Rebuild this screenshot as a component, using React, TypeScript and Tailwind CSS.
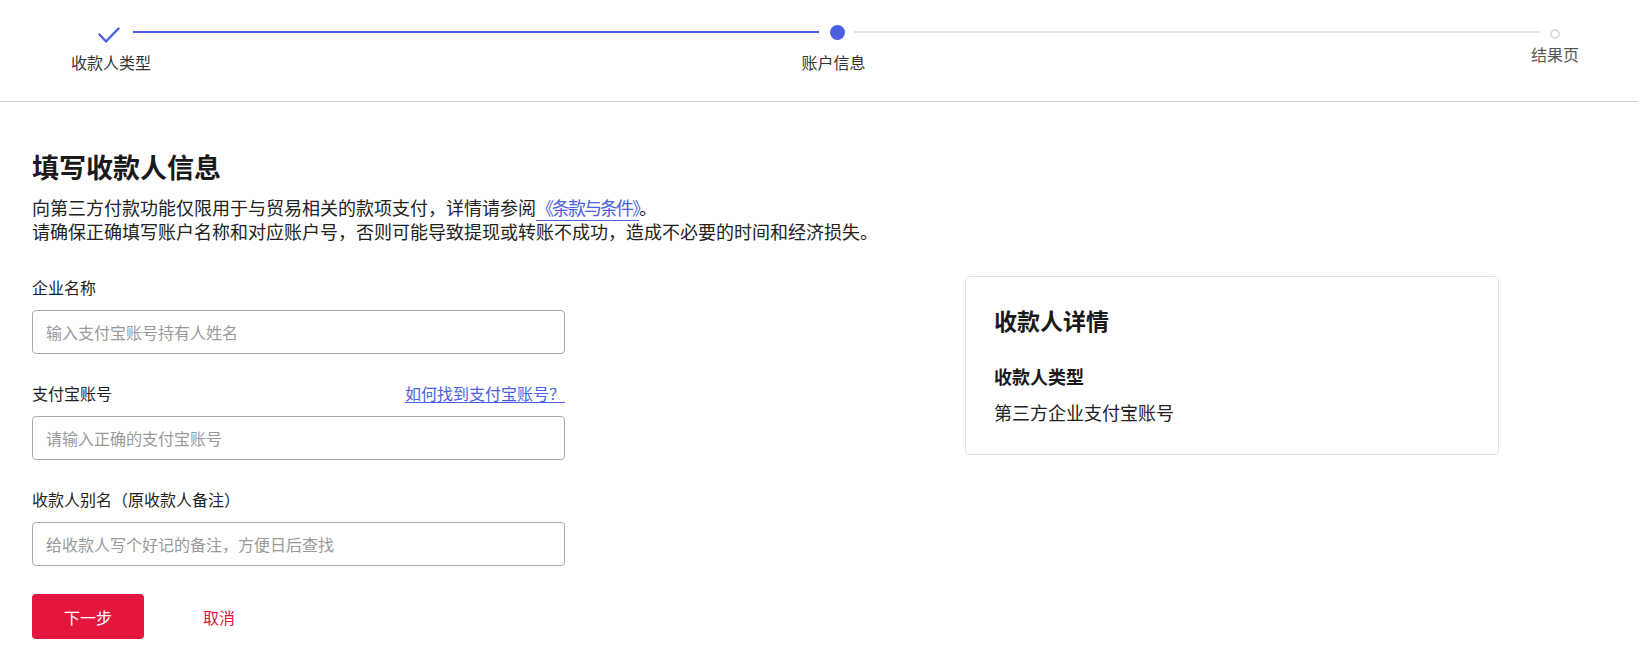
const FONT = { fontFamily: '"Noto Sans CJK SC", "Noto Sans", sans-serif' };

function Stepper() {
  return (
    <div className="flex h-[102px] items-start border-b border-[#cfcfcf] pl-[98px] pr-[78px] pt-[20px]">
      {/* step 1 - done */}
      <div className="flex w-[22px] flex-col items-center">
        <div className="flex h-[24px] w-[22px] items-center justify-center">
          <svg width="22" height="18" viewBox="0 0 22 18" fill="none" className="mt-[8px]">
            <path d="M1.5 7.5 L8 14.5 L20.5 1.5" stroke="#4a60e0" strokeWidth="2.4" strokeLinecap="round" strokeLinejoin="round" />
          </svg>
        </div>
        <span className="mt-[7px] whitespace-nowrap pl-[4px] text-[16px] leading-[22px] text-[#333]">收款人类型</span>
      </div>
      <div className="ml-[13px] mr-[11px] mt-[11px] h-[2px] flex-1 bg-[#4a60e0]" />
      {/* step 2 - current */}
      <div className="flex w-[15px] flex-col items-center">
        <div className="flex h-[24px] items-center">
          <div className="h-[15px] w-[15px] rounded-full bg-[#4a60e0]" />
        </div>
        <span className="mt-[7px] whitespace-nowrap pr-[8px] text-[16px] leading-[22px] text-[#333]">账户信息</span>
      </div>
      <div className="ml-[9px] mr-[10px] mt-[11px] h-[2px] flex-1 bg-[#e4e4e4]" />
      {/* step 3 - pending */}
      <div className="flex w-[10px] flex-col items-center">
        <div className="flex h-[28px] items-center">
          <div className="h-[10px] w-[10px] rounded-full border-2 border-[#dedede] bg-white" />
        </div>
        <span className="-mt-[5px] whitespace-nowrap text-[16px] leading-[22px] text-[#555]">结果页</span>
      </div>
    </div>
  );
}

function Field({
  label,
  placeholder,
  link,
}: {
  label: string;
  placeholder: string;
  link?: string;
}) {
  return (
    <div className="flex flex-col">
      <div className="flex h-[22px] items-center justify-between">
        <span className="text-[16px] leading-[22px] text-[#222]">{label}</span>
        {link && (
          <a className="text-[16px] leading-[22px] text-[#4a60e0] underline underline-offset-2" href="#">
            {link}
          </a>
        )}
      </div>
      <input
        placeholder={placeholder}
        className="mt-[12px] h-[44px] w-full rounded-[4px] border border-[#ababab] px-[13px] text-[16px] text-[#222] outline-none placeholder:text-[#999]"
        style={FONT}
      />
    </div>
  );
}

export default function App() {
  return (
    <div className="min-h-screen bg-white text-[#222]" style={FONT}>
      <Stepper />
      <div className="pl-[32px] pt-[47px]">
        <h1 className="text-[27px] font-bold leading-[36px] text-[#1a1a1a]">填写收款人信息</h1>
        <p className="mt-[10px] text-[18px] leading-[24px] text-[#222]">
          向第三方付款功能仅限用于与贸易相关的款项支付，详情请参阅
          <a
            href="#"
            className="tracking-[-2px] text-[#4a60e0] underline decoration-[#4a60e0] underline-offset-[5px]"
          >
            《条款与条件》
          </a>
          。
        </p>
        <p className="text-[18px] leading-[24px] text-[#222]">
          请确保正确填写账户名称和对应账户号，否则可能导致提现或转账不成功，造成不必要的时间和经济损失。
        </p>

        <div className="mt-[33px] flex items-start gap-[400px]">
          <div className="flex w-[533px] flex-col gap-[28px]">
            <Field label="企业名称" placeholder="输入支付宝账号持有人姓名" />
            <Field label="支付宝账号" placeholder="请输入正确的支付宝账号" link="如何找到支付宝账号？" />
            <Field label="收款人别名（原收款人备注）" placeholder="给收款人写个好记的备注，方便日后查找" />
            <div className="flex items-center">
              <button className="h-[45px] w-[112px] rounded-[4px] bg-[#e5163d] text-[16px] text-white">
                下一步
              </button>
              <button className="ml-[59px] text-[16px] text-[#e5163d]">取消</button>
            </div>
          </div>

          <div className="w-[534px] rounded-[4px] border border-[#e3e3e3] px-[28px] pb-[30px] pt-[28px]">
            <h2 className="text-[23px] font-bold leading-[30px] text-[#1a1a1a]">收款人详情</h2>
            <div className="mt-[29px] text-[18px] font-bold leading-[24px] text-[#1a1a1a]">收款人类型</div>
            <div className="mt-[12px] text-[18px] leading-[24px] text-[#222]">第三方企业支付宝账号</div>
          </div>
        </div>
      </div>
    </div>
  );
}
